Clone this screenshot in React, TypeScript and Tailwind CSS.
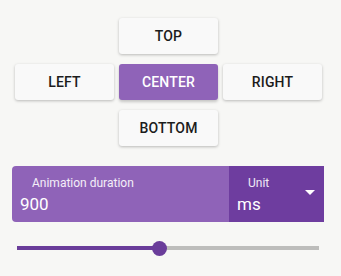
import { useState } from 'react';

const positions = ['top', 'left', 'center', 'right', 'bottom'] as const;
type Pos = (typeof positions)[number];

const cell: Record<Pos, string> = {
  top: 'col-start-2 row-start-1',
  left: 'col-start-1 row-start-2',
  center: 'col-start-2 row-start-2',
  right: 'col-start-3 row-start-2',
  bottom: 'col-start-2 row-start-3',
};

export default function App() {
  const [active, setActive] = useState<Pos>('center');
  const [duration, setDuration] = useState('900');
  const pct = 47;

  return (
    <div className="w-[341px] h-[276px] bg-[#f7f7f5] font-['Roboto',sans-serif] overflow-hidden">
      <div className="pt-[18px] pl-[15px] grid grid-cols-[99px_99px_99px] grid-rows-[36px_36px_36px] gap-x-[5px] gap-y-[10px]">
        {positions.map((p) => (
          <button
            key={p}
            onClick={() => setActive(p)}
            className={
              'rounded-[3px] text-[14px] font-medium uppercase tracking-[0.2px] ' +
              cell[p] +
              (active === p
                ? ' bg-[#8f63b8] text-white shadow-[0_2px_3px_rgba(0,0,0,0.2)]'
                : ' bg-[#f9f9f9] text-[#1c1c1c] shadow-[0_1px_3px_rgba(0,0,0,0.25)]')
            }
          >
            {p}
          </button>
        ))}
      </div>

      <div className="mt-[20px] ml-[12px] w-[312px] h-[56px] flex">
        <div className="w-[217px] bg-[#8f63b8] rounded-l-[4px] flex flex-col pl-[8px] pt-[10px]">
          <span className="pl-[12px] text-[12px] leading-[14px] text-white/90">Animation duration</span>
          <input
            value={duration}
            onChange={(e) => setDuration(e.target.value)}
            className="mt-[4px] bg-transparent text-white text-[17px] leading-[20px] outline-none w-[180px]"
          />
        </div>
        <div className="flex-1 bg-[#6e3d9f] flex items-start pt-[10px] pl-[8px] pr-[9px]">
          <div className="flex-1 flex flex-col">
            <span className="pl-[11px] text-[12px] leading-[14px] text-white/90">Unit</span>
            <span className="mt-[4px] text-white text-[17px] leading-[20px]">ms</span>
          </div>
          <svg width="10" height="5" viewBox="0 0 10 5" className="mt-[14px]">
            <path d="M0 0 L10 0 L5 5 Z" fill="white" />
          </svg>
        </div>
      </div>

      <div className="mt-[18px] ml-[17px] w-[302px] h-[16px] relative flex items-center">
        <div className="h-[4px] bg-[#6a3d9a]" style={{ width: `${pct}%` }} />
        <div className="h-[4px] flex-1 bg-[#bdbdbb]" />
        <div
          className="absolute top-[1px] w-[15px] h-[15px] -ml-[7px] rounded-full bg-[#6a3d9a]"
          style={{ left: `${pct}%` }}
        />
      </div>
    </div>
  );
}
